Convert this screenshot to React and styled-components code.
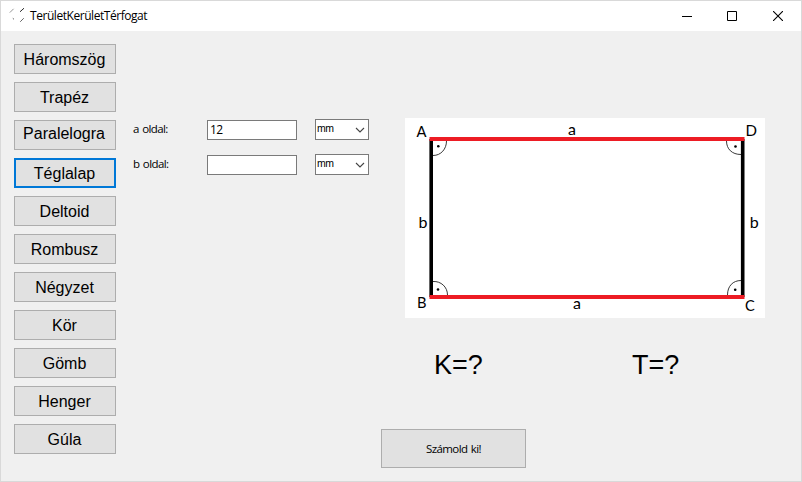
import React, { useState } from "react";
import styled, { createGlobalStyle } from "styled-components";

const GlobalStyle = createGlobalStyle`
  * { box-sizing: border-box; }
  body { margin: 0; background: #f0f0f0; }
`;

const Window = styled.div`
  width: 802px;
  height: 482px;
  display: flex;
  flex-direction: column;
  border: 1px solid #d9d9d9;
  background: #f0f0f0;
  color: #000;
  overflow: hidden;
`;

const TitleBar = styled.header`
  flex: none;
  height: 30px;
  display: flex;
  align-items: center;
  background: #fff;
`;

const AppIcon = styled.svg`
  width: 16px;
  height: 16px;
  margin-left: 8px;
`;

const Title = styled.h1`
  flex: 1;
  margin: 0 0 0 5px;
  font: 400 12px/16px "Open Sans", sans-serif;
  letter-spacing: -0.45px;
`;

const CaptionButton = styled.button`
  width: 46px;
  height: 30px;
  padding: 0;
  border: 0;
  background: transparent;
  display: grid;
  place-items: center;
`;

const Body = styled.main`
  flex: 1;
  display: flex;
  padding: 13px 0 0 13px;
`;

const Sidebar = styled.nav`
  width: 102px;
  display: flex;
  flex-direction: column;
  gap: 8px;
`;

const ShapeButton = styled.button`
  height: 30px;
  padding: ${(p) => (p.$raised ? "0 2px 3px 0" : "1px 1px 0 0")};
  border: ${(p) => (p.$active ? "2px solid #0078d7" : "1px solid #adadad")};
  background: #e1e1e1;
  color: #000;
  font: 16px/18px "Liberation Sans", Arial, sans-serif;
  text-align: center;
`;

const Form = styled.form`
  width: 236px;
  margin: 75px 0 0 17px;
  display: flex;
  flex-direction: column;
  gap: 14px;
`;

const Field = styled.div`
  height: 21px;
  display: grid;
  grid-template-columns: 74px 90px 54px;
  align-items: end;
`;

const Label = styled.label`
  align-self: start;
  padding: 2px 0 0;
  font: 11.5px/15px "Open Sans", sans-serif;
  letter-spacing: -0.6px;
  word-spacing: 1px;
  white-space: nowrap;
`;

const TextBox = styled.input`
  width: 90px;
  height: 20px;
  padding: 0 2px 1px;
  border: 1px solid #7a7a7a;
  background: #fff;
  color: #000;
  font: 12px/16px "Open Sans", sans-serif;
  letter-spacing: -0.5px;
  outline: none;
`;

const UnitBox = styled.button`
  width: 54px;
  height: 21px;
  margin-left: 18px;
  padding: 0 3px 2px 1px;
  display: flex;
  align-items: center;
  justify-content: space-between;
  border: 1px solid #7a7a7a;
  background: #fff;
  color: #000;
  font: 10.5px/15px "Liberation Sans", Arial, sans-serif;
  letter-spacing: -0.4px;
`;

const Chevron = styled.svg`
  width: 10px;
  height: 6px;
  margin-top: 2px;
`;

const Panel = styled.section`
  width: 385px;
  margin: 74px 0 0 12px;
  display: flex;
  flex-direction: column;
`;

const Diagram = styled.svg`
  width: 360px;
  height: 200px;
  margin-left: 24px;
  background: #fff;
  font-family: Lato, sans-serif;
  font-size: 16px;
`;

const Results = styled.div`
  height: 31px;
  margin: 32px 0 0 53px;
  display: grid;
  grid-template-columns: 198px 1fr;
  font: 27px/31px "Liberation Sans", Arial, sans-serif;
`;

const CalculateButton = styled.button`
  width: 145px;
  height: 39px;
  margin-top: 48px;
  padding: 0;
  border: 1px solid #adadad;
  background: #e1e1e1;
  color: #000;
  font: 11.5px/15px "Open Sans", sans-serif;
  letter-spacing: -0.6px;
  word-spacing: 1px;
`;

const shapes = [
  "Háromszög", "Trapéz", "Paralelogra", "Téglalap", "Deltoid", "Rombusz",
  "Négyzet", "Kör", "Gömb", "Henger", "Gúla",
];

function Measure({ name, initial }) {
  const [value, setValue] = useState(initial);
  return (
    <Field>
      <Label htmlFor={name}>{name} oldal:</Label>
      <TextBox id={name} value={value} onChange={(e) => setValue(e.target.value)} />
      <UnitBox type="button">
        mm
        <Chevron viewBox="0 0 10 6" fill="none" stroke="#444" strokeWidth="1.1">
          <path d="M1 1l4 4 4-4" />
        </Chevron>
      </UnitBox>
    </Field>
  );
}

function RectangleDiagram() {
  return (
    <Diagram viewBox="0 0 360 200">
      <path d="M26.2 21V179M337.7 21V179" stroke="#000" strokeWidth="3.6" />
      <path d="M24.5 21H339.5M24.5 179H339.5" stroke="#ed1c24" strokeWidth="3.8" />
      <g fill="none" stroke="#222" strokeWidth="0.9">
        <path d="M41.5 23C41.5 31 36 37.5 28 37.5" />
        <path d="M321.5 23C321.5 31 327 36.5 336 36.5" />
        <path d="M28 163.5C36 163 42.5 169 42.5 177" />
        <path d="M322.5 177C322.5 168 328 162.5 336 162.5" />
      </g>
      <g fill="#000">
        <circle cx="33.3" cy="28.2" r="1.3" />
        <circle cx="330.5" cy="28.5" r="1.3" />
        <circle cx="33" cy="171.5" r="1.3" />
        <circle cx="330.2" cy="171.8" r="1.3" />
        <text x="11.5" y="19" textLength="10" lengthAdjust="spacingAndGlyphs">A</text>
        <text x="163" y="17">a</text>
        <text x="340.5" y="18" textLength="11.5" lengthAdjust="spacingAndGlyphs">D</text>
        <text x="13.5" y="109.5">b</text>
        <text x="344.8" y="109.5">b</text>
        <text x="12" y="190" textLength="9.5" lengthAdjust="spacingAndGlyphs">B</text>
        <text x="168" y="190.5">a</text>
        <text x="340" y="193" textLength="9.8" lengthAdjust="spacingAndGlyphs">C</text>
      </g>
    </Diagram>
  );
}

export default function App() {
  const [active, setActive] = useState("Téglalap");
  return (
    <Window>
      <GlobalStyle />
      <TitleBar>
        <AppIcon viewBox="0 0 16 16" fill="none" strokeWidth="0.9">
          <path d="M.8 4.6L4.6 .8" stroke="#888" />
          <path d="M11 3.8L15 .2" stroke="#111" />
          <path d="M3.8 10.3l1.2 1M11.2 13.8l3.6-3.6" stroke="#555" />
        </AppIcon>
        <Title>TerületKerületTérfogat</Title>
        <CaptionButton aria-label="Minimize">
          <svg width="12" height="10" viewBox="0 0 12 10"><path d="M2 5.5h10" stroke="#000" /></svg>
        </CaptionButton>
        <CaptionButton aria-label="Maximize">
          <svg width="12" height="10" viewBox="0 0 12 10"><path d="M1.5.5h9v9h-9z" fill="none" stroke="#000" /></svg>
        </CaptionButton>
        <CaptionButton aria-label="Close">
          <svg width="10" height="10" viewBox="0 0 10 10"><path d="M0 0l10 10M10 0L0 10" stroke="#000" strokeWidth="1.1" /></svg>
        </CaptionButton>
      </TitleBar>
      <Body>
        <Sidebar>
          {shapes.map((shape) => (
            <ShapeButton
              key={shape}
              $active={shape === active}
              $raised={shape === "Paralelogra"}
              onClick={() => setActive(shape)}
            >
              {shape}
            </ShapeButton>
          ))}
        </Sidebar>
        <Form>
          <Measure name="a" initial="12" />
          <Measure name="b" initial="" />
        </Form>
        <Panel>
          <RectangleDiagram />
          <Results>
            <span>K=?</span>
            <span>T=?</span>
          </Results>
          <CalculateButton>Számold ki!</CalculateButton>
        </Panel>
      </Body>
    </Window>
  );
}
